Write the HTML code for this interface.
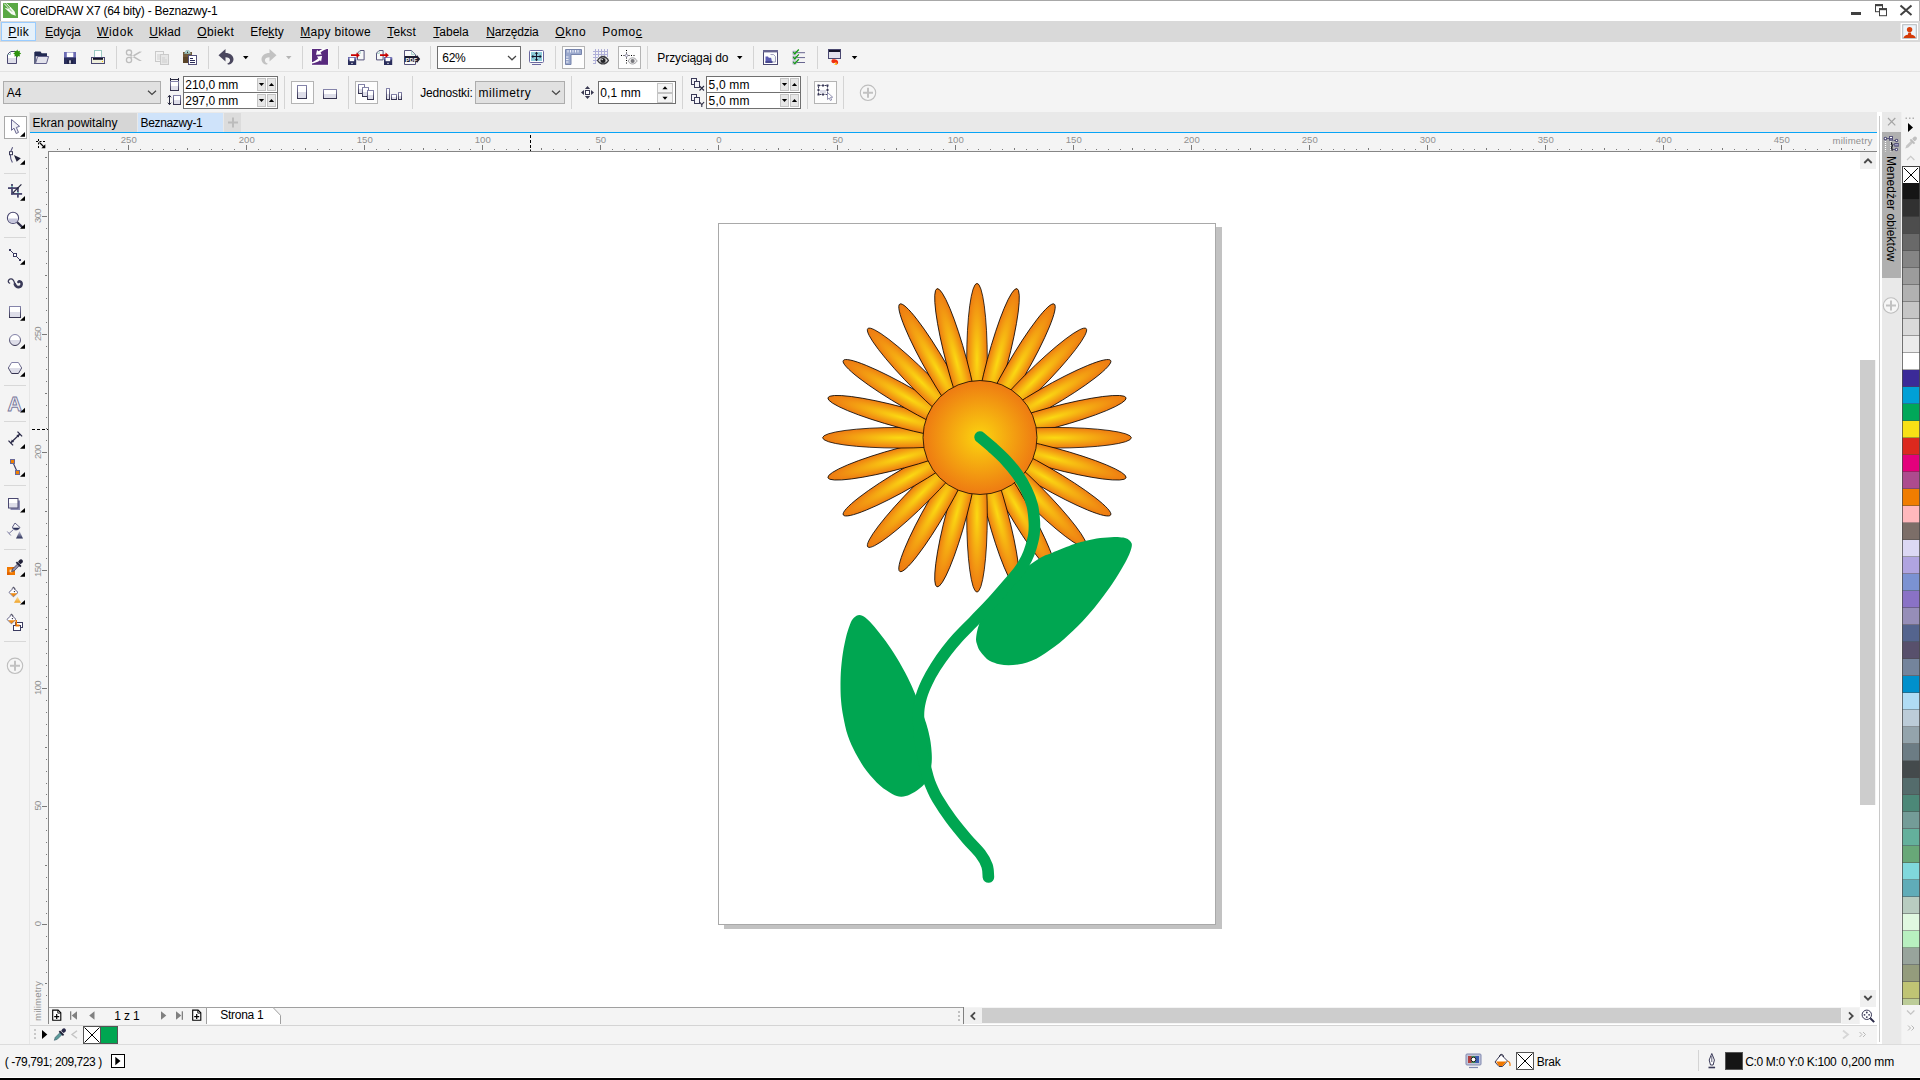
<!DOCTYPE html>
<html lang="pl"><head><meta charset="utf-8"><title>CorelDRAW X7 (64 bity) - Beznazwy-1</title><style>
html,body{margin:0;padding:0;}
body{width:1920px;height:1080px;overflow:hidden;background:#f4f4f4;font-family:"Liberation Sans", sans-serif;font-size:12px;color:#000;position:relative}
.a{position:absolute}
.t{position:absolute;white-space:nowrap;line-height:1}
u{text-decoration:underline;text-underline-offset:1px}
svg{position:absolute;left:0;top:0;overflow:visible}
</style></head><body>
<div class="a" style="left:0px;top:0px;width:1920px;height:21px;background:#ffffff;"></div>
<div class="a" style="left:0px;top:0px;width:1920px;height:1px;background:#a8a8a8;"></div>
<div class="a" style="left:1919px;top:0px;width:1px;height:21px;background:#b4b4b4;"></div>
<div class="a" style="left:0px;top:0px;width:1px;height:21px;background:#a8a8a8;"></div>
<div class="a" style="left:0px;top:21px;width:1920px;height:21px;background:#d9d9d9;"></div>
<div class="a" style="left:1px;top:22px;width:35px;height:19px;background:#e5f1fb;border:1px solid #99ccff;box-sizing:border-box;"></div>
<div class="a" style="left:1900px;top:23px;width:18px;height:17px;background:#f4f4f4;border:1px solid #e8e8e8;box-sizing:border-box;"></div>
<div class="a" style="left:0px;top:42px;width:1920px;height:29px;background:#f4f4f4;"></div>
<div class="a" style="left:0px;top:71px;width:1920px;height:1px;background:#e2e2e2;"></div>
<div class="a" style="left:0px;top:72px;width:1920px;height:39px;background:#f4f4f4;"></div>
<div class="a" style="left:0px;top:112px;width:30px;height:933px;background:#f4f4f4;"></div>
<div class="a" style="left:29px;top:112px;width:1px;height:933px;background:#e6e6e6;"></div>
<div class="a" style="left:30px;top:112px;width:1847px;height:20px;background:#e9e9e9;"></div>
<div class="a" style="left:30px;top:113px;width:107px;height:19px;background:#d6d6d6;"></div>
<div class="a" style="left:138px;top:113px;width:85px;height:19px;background:#cfe3fa;"></div>
<div class="a" style="left:224px;top:113px;width:17px;height:19px;background:#dcdcdc;"></div>
<div class="a" style="left:30px;top:132px;width:1847px;height:1px;background:#08a4f6;"></div>
<div class="a" style="left:30px;top:133px;width:1847px;height:18px;background:#f4f4f4;"></div>
<div class="a" style="left:30px;top:151px;width:18px;height:873px;background:#f4f4f4;"></div>
<div class="a" style="left:49px;top:152px;width:1811px;height:855px;background:#ffffff;"></div>
<div class="a" style="left:1860px;top:152px;width:17px;height:872px;background:#ffffff;"></div>
<div class="a" style="left:48px;top:151px;width:1829px;height:1px;background:#868686;"></div>
<div class="a" style="left:48px;top:151px;width:1px;height:873px;background:#868686;"></div>
<div class="a" style="left:1860px;top:152px;width:16px;height:17px;background:#f0f0f0;"></div>
<div class="a" style="left:1860px;top:360px;width:15px;height:445px;background:#cdcdcd;"></div>
<div class="a" style="left:1875px;top:360px;width:1px;height:445px;background:#f4f4f4;"></div>
<div class="a" style="left:1860px;top:990px;width:16px;height:17px;background:#f0f0f0;"></div>
<div class="a" style="left:49px;top:1007px;width:915px;height:1px;background:#a0a0a0;"></div>
<div class="a" style="left:49px;top:1008px;width:914px;height:16px;background:#f4f4f4;"></div>
<div class="a" style="left:963px;top:1007px;width:1px;height:17px;background:#808080;"></div>
<div class="a" style="left:964px;top:1008px;width:18px;height:16px;background:#f0f0f0;"></div>
<div class="a" style="left:982px;top:1008px;width:859px;height:15px;background:#cdcdcd;"></div>
<div class="a" style="left:1842px;top:1008px;width:17px;height:16px;background:#f0f0f0;"></div>
<div class="a" style="left:964px;top:1024px;width:913px;height:1px;background:#ffffff;"></div>
<div class="a" style="left:30px;top:1025px;width:1847px;height:1px;background:#d4d4d4;"></div>
<div class="a" style="left:30px;top:1026px;width:1847px;height:18px;background:#f4f4f4;"></div>
<div class="a" style="left:1877px;top:112px;width:5px;height:932px;background:#ffffff;"></div>
<div class="a" style="left:1879px;top:116px;width:1px;height:926px;background:#c8c8c8;"></div>
<div class="a" style="left:1882px;top:112px;width:19px;height:932px;background:#e9e9e9;"></div>
<div class="a" style="left:1882px;top:132px;width:19px;height:146px;background:#b0b0b0;"></div>
<div class="a" style="left:1901px;top:112px;width:1px;height:932px;background:#f0f0f0;"></div>
<div class="a" style="left:1902px;top:112px;width:18px;height:932px;background:#f4f4f4;"></div>
<div class="a" style="left:0px;top:1044px;width:1920px;height:1px;background:#dcdcdc;"></div>
<div class="a" style="left:0px;top:1045px;width:1920px;height:32px;background:#f4f4f4;"></div>
<div class="a" style="left:0px;top:1077px;width:1920px;height:1px;background:#ffffff;"></div>
<div class="a" style="left:0px;top:1078px;width:1920px;height:2px;background:#000000;"></div>
<div class="a" style="left:116px;top:46px;width:1px;height:23px;background:#d4d4d4;"></div>
<div class="a" style="left:208px;top:46px;width:1px;height:23px;background:#d4d4d4;"></div>
<div class="a" style="left:302px;top:46px;width:1px;height:23px;background:#d4d4d4;"></div>
<div class="a" style="left:338px;top:46px;width:1px;height:23px;background:#d4d4d4;"></div>
<div class="a" style="left:430px;top:46px;width:1px;height:23px;background:#d4d4d4;"></div>
<div class="a" style="left:555px;top:46px;width:1px;height:23px;background:#d4d4d4;"></div>
<div class="a" style="left:647px;top:46px;width:1px;height:23px;background:#d4d4d4;"></div>
<div class="a" style="left:753px;top:46px;width:1px;height:23px;background:#d4d4d4;"></div>
<div class="a" style="left:817px;top:46px;width:1px;height:23px;background:#d4d4d4;"></div>
<div class="a" style="left:284px;top:76px;width:1px;height:33px;background:#d4d4d4;"></div>
<div class="a" style="left:348px;top:76px;width:1px;height:33px;background:#d4d4d4;"></div>
<div class="a" style="left:412px;top:76px;width:1px;height:33px;background:#d4d4d4;"></div>
<div class="a" style="left:571px;top:76px;width:1px;height:33px;background:#d4d4d4;"></div>
<div class="a" style="left:682px;top:76px;width:1px;height:33px;background:#d4d4d4;"></div>
<div class="a" style="left:807px;top:76px;width:1px;height:33px;background:#d4d4d4;"></div>
<div class="a" style="left:843px;top:76px;width:1px;height:33px;background:#d4d4d4;"></div>
<div class="a" style="left:4px;top:173px;width:22px;height:1px;background:#d8d8d8;"></div>
<div class="a" style="left:4px;top:237px;width:22px;height:1px;background:#d8d8d8;"></div>
<div class="a" style="left:4px;top:385px;width:22px;height:1px;background:#d8d8d8;"></div>
<div class="a" style="left:4px;top:421px;width:22px;height:1px;background:#d8d8d8;"></div>
<div class="a" style="left:4px;top:485px;width:22px;height:1px;background:#d8d8d8;"></div>
<div class="a" style="left:4px;top:549px;width:22px;height:1px;background:#d8d8d8;"></div>
<div class="a" style="left:4px;top:641px;width:22px;height:1px;background:#d8d8d8;"></div>
<div class="a" style="left:437px;top:46px;width:84px;height:23px;background:#ffffff;border:1px solid #707070;box-sizing:border-box;"></div>
<div class="a" style="left:562px;top:46px;width:23px;height:23px;background:#fdfdfd;border:1px solid #b4b4b4;box-sizing:border-box;"></div>
<div class="a" style="left:618px;top:46px;width:23px;height:23px;background:#fdfdfd;border:1px solid #b4b4b4;box-sizing:border-box;"></div>
<div class="a" style="left:3px;top:81px;width:158px;height:23px;background:#e1e1e1;border:1px solid #adadad;box-sizing:border-box;"></div>
<div class="a" style="left:183px;top:76px;width:95px;height:17px;background:#ffffff;border:1px solid #707070;box-sizing:border-box;"></div>
<div class="a" style="left:183px;top:92px;width:95px;height:17px;background:#ffffff;border:1px solid #707070;box-sizing:border-box;"></div>
<div class="a" style="left:257px;top:78px;width:9px;height:13px;background:#e6e6e6;border:1px solid #c4c4c4;box-sizing:border-box;"></div>
<div class="a" style="left:267px;top:78px;width:9px;height:13px;background:#e6e6e6;border:1px solid #c4c4c4;box-sizing:border-box;"></div>
<div class="a" style="left:257px;top:94px;width:9px;height:13px;background:#e6e6e6;border:1px solid #c4c4c4;box-sizing:border-box;"></div>
<div class="a" style="left:267px;top:94px;width:9px;height:13px;background:#e6e6e6;border:1px solid #c4c4c4;box-sizing:border-box;"></div>
<div class="a" style="left:291px;top:81px;width:23px;height:23px;background:#fdfdfd;border:1px solid #b4b4b4;box-sizing:border-box;"></div>
<div class="a" style="left:355px;top:81px;width:23px;height:23px;background:#fdfdfd;border:1px solid #b4b4b4;box-sizing:border-box;"></div>
<div class="a" style="left:475px;top:81px;width:90px;height:23px;background:#e1e1e1;border:1px solid #adadad;box-sizing:border-box;"></div>
<div class="a" style="left:598px;top:81px;width:78px;height:23px;background:#ffffff;border:1px solid #707070;box-sizing:border-box;"></div>
<div class="a" style="left:657px;top:83px;width:16px;height:10px;background:#f4f4f4;border:1px solid #c4c4c4;box-sizing:border-box;"></div>
<div class="a" style="left:657px;top:93px;width:16px;height:10px;background:#f4f4f4;border:1px solid #c4c4c4;box-sizing:border-box;"></div>
<div class="a" style="left:706px;top:76px;width:95px;height:17px;background:#ffffff;border:1px solid #707070;box-sizing:border-box;"></div>
<div class="a" style="left:706px;top:92px;width:95px;height:17px;background:#ffffff;border:1px solid #707070;box-sizing:border-box;"></div>
<div class="a" style="left:780px;top:78px;width:9px;height:13px;background:#e6e6e6;border:1px solid #c4c4c4;box-sizing:border-box;"></div>
<div class="a" style="left:790px;top:78px;width:9px;height:13px;background:#e6e6e6;border:1px solid #c4c4c4;box-sizing:border-box;"></div>
<div class="a" style="left:780px;top:94px;width:9px;height:13px;background:#e6e6e6;border:1px solid #c4c4c4;box-sizing:border-box;"></div>
<div class="a" style="left:790px;top:94px;width:9px;height:13px;background:#e6e6e6;border:1px solid #c4c4c4;box-sizing:border-box;"></div>
<div class="a" style="left:814px;top:81px;width:23px;height:23px;background:#fdfdfd;border:1px solid #b4b4b4;box-sizing:border-box;"></div>
<div class="a" style="left:4px;top:116px;width:23px;height:23px;background:#ffffff;border:1px solid #a8a8a8;box-sizing:border-box;"></div>
<svg width="1920" height="1080"><path d="M206.5 1024V1007.500H273L280.500 1015.300V1024" fill="#fff" stroke="#a0a0a0" stroke-width="1"/></svg>
<div class="a" style="left:83px;top:1026px;width:18px;height:18px;background:#ffffff;border:1px solid #555;box-sizing:border-box;"></div>
<div class="a" style="left:100px;top:1026px;width:18px;height:18px;background:#00a651;border:1px solid #555;box-sizing:border-box;"></div>
<div class="a" style="left:111px;top:1054px;width:14px;height:14px;background:#ffffff;border:1px solid #000;box-sizing:border-box;"></div>
<div class="a" style="left:1516px;top:1052px;width:18px;height:18px;background:#ffffff;border:1px solid #555;box-sizing:border-box;"></div>
<div class="a" style="left:1725px;top:1052px;width:18px;height:18px;background:#151515;border:1px solid #555;box-sizing:border-box;"></div>
<div class="a" style="left:1698px;top:1050px;width:1px;height:21px;background:#d4d4d4;"></div>
<div class="t" style="left:1897.4px;top:156.2px;font-size:12px;transform-origin:0 0;transform:rotate(90deg);letter-spacing:0.08px">Menedżer obiektów</div>
<svg width="1920" height="1080"><path d="M57 149h1v1h-1zM69 148h1v2h-1zM81 149h1v1h-1zM92 149h1v1h-1zM104 149h1v1h-1zM116 149h1v1h-1zM128 145h1v5h-1zM140 149h1v1h-1zM152 149h1v1h-1zM163 149h1v1h-1zM175 149h1v1h-1zM187 148h1v2h-1zM199 149h1v1h-1zM211 149h1v1h-1zM222 149h1v1h-1zM234 149h1v1h-1zM246 145h1v5h-1zM258 149h1v1h-1zM270 149h1v1h-1zM281 149h1v1h-1zM293 149h1v1h-1zM305 148h1v2h-1zM317 149h1v1h-1zM329 149h1v1h-1zM341 149h1v1h-1zM352 149h1v1h-1zM364 145h1v5h-1zM376 149h1v1h-1zM388 149h1v1h-1zM400 149h1v1h-1zM411 149h1v1h-1zM423 148h1v2h-1zM435 149h1v1h-1zM447 149h1v1h-1zM459 149h1v1h-1zM470 149h1v1h-1zM482 145h1v5h-1zM494 149h1v1h-1zM506 149h1v1h-1zM518 149h1v1h-1zM530 149h1v1h-1zM541 148h1v2h-1zM553 149h1v1h-1zM565 149h1v1h-1zM577 149h1v1h-1zM589 149h1v1h-1zM600 145h1v5h-1zM612 149h1v1h-1zM624 149h1v1h-1zM636 149h1v1h-1zM648 149h1v1h-1zM659 148h1v2h-1zM671 149h1v1h-1zM683 149h1v1h-1zM695 149h1v1h-1zM707 149h1v1h-1zM718 145h1v5h-1zM730 149h1v1h-1zM742 149h1v1h-1zM754 149h1v1h-1zM766 149h1v1h-1zM778 148h1v2h-1zM789 149h1v1h-1zM801 149h1v1h-1zM813 149h1v1h-1zM825 149h1v1h-1zM837 145h1v5h-1zM848 149h1v1h-1zM860 149h1v1h-1zM872 149h1v1h-1zM884 149h1v1h-1zM896 148h1v2h-1zM907 149h1v1h-1zM919 149h1v1h-1zM931 149h1v1h-1zM943 149h1v1h-1zM955 145h1v5h-1zM967 149h1v1h-1zM978 149h1v1h-1zM990 149h1v1h-1zM1002 149h1v1h-1zM1014 148h1v2h-1zM1026 149h1v1h-1zM1037 149h1v1h-1zM1049 149h1v1h-1zM1061 149h1v1h-1zM1073 145h1v5h-1zM1085 149h1v1h-1zM1096 149h1v1h-1zM1108 149h1v1h-1zM1120 149h1v1h-1zM1132 148h1v2h-1zM1144 149h1v1h-1zM1155 149h1v1h-1zM1167 149h1v1h-1zM1179 149h1v1h-1zM1191 145h1v5h-1zM1203 149h1v1h-1zM1215 149h1v1h-1zM1226 149h1v1h-1zM1238 149h1v1h-1zM1250 148h1v2h-1zM1262 149h1v1h-1zM1274 149h1v1h-1zM1285 149h1v1h-1zM1297 149h1v1h-1zM1309 145h1v5h-1zM1321 149h1v1h-1zM1333 149h1v1h-1zM1344 149h1v1h-1zM1356 149h1v1h-1zM1368 148h1v2h-1zM1380 149h1v1h-1zM1392 149h1v1h-1zM1404 149h1v1h-1zM1415 149h1v1h-1zM1427 145h1v5h-1zM1439 149h1v1h-1zM1451 149h1v1h-1zM1463 149h1v1h-1zM1474 149h1v1h-1zM1486 148h1v2h-1zM1498 149h1v1h-1zM1510 149h1v1h-1zM1522 149h1v1h-1zM1533 149h1v1h-1zM1545 145h1v5h-1zM1557 149h1v1h-1zM1569 149h1v1h-1zM1581 149h1v1h-1zM1592 149h1v1h-1zM1604 148h1v2h-1zM1616 149h1v1h-1zM1628 149h1v1h-1zM1640 149h1v1h-1zM1652 149h1v1h-1zM1663 145h1v5h-1zM1675 149h1v1h-1zM1687 149h1v1h-1zM1699 149h1v1h-1zM1711 149h1v1h-1zM1722 148h1v2h-1zM1734 149h1v1h-1zM1746 149h1v1h-1zM1758 149h1v1h-1zM1770 149h1v1h-1zM1781 145h1v5h-1zM1793 149h1v1h-1zM1805 149h1v1h-1zM1817 149h1v1h-1zM1829 149h1v1h-1zM1841 148h1v2h-1zM1852 149h1v1h-1zM1864 149h1v1h-1zM46 995h1v1h-1zM45 983h2v1h-2zM46 972h1v1h-1zM46 960h1v1h-1zM46 948h1v1h-1zM46 936h1v1h-1zM42 924h5v1h-5zM46 913h1v1h-1zM46 901h1v1h-1zM46 889h1v1h-1zM46 877h1v1h-1zM45 865h2v1h-2zM46 854h1v1h-1zM46 842h1v1h-1zM46 830h1v1h-1zM46 818h1v1h-1zM42 806h5v1h-5zM46 794h1v1h-1zM46 783h1v1h-1zM46 771h1v1h-1zM46 759h1v1h-1zM45 747h2v1h-2zM46 735h1v1h-1zM46 724h1v1h-1zM46 712h1v1h-1zM46 700h1v1h-1zM42 688h5v1h-5zM46 676h1v1h-1zM46 665h1v1h-1zM46 653h1v1h-1zM46 641h1v1h-1zM45 629h2v1h-2zM46 617h1v1h-1zM46 606h1v1h-1zM46 594h1v1h-1zM46 582h1v1h-1zM42 570h5v1h-5zM46 558h1v1h-1zM46 546h1v1h-1zM46 535h1v1h-1zM46 523h1v1h-1zM45 511h2v1h-2zM46 499h1v1h-1zM46 487h1v1h-1zM46 476h1v1h-1zM46 464h1v1h-1zM42 452h5v1h-5zM46 440h1v1h-1zM46 428h1v1h-1zM46 417h1v1h-1zM46 405h1v1h-1zM45 393h2v1h-2zM46 381h1v1h-1zM46 369h1v1h-1zM46 357h1v1h-1zM46 346h1v1h-1zM42 334h5v1h-5zM46 322h1v1h-1zM46 310h1v1h-1zM46 298h1v1h-1zM46 287h1v1h-1zM45 275h2v1h-2zM46 263h1v1h-1zM46 251h1v1h-1zM46 239h1v1h-1zM46 228h1v1h-1zM42 216h5v1h-5zM46 204h1v1h-1zM46 192h1v1h-1zM46 180h1v1h-1zM46 168h1v1h-1zM45 157h2v1h-2z" fill="#7a7a7a"/><path d="M530.5 135v16" stroke="#000" stroke-width="1" stroke-dasharray="3 2"/><path d="M32 429.5h16" stroke="#000" stroke-width="1" stroke-dasharray="3 2"/><path d="M36 141.5h10M38.5 139v10" stroke="#000" stroke-width="1" stroke-dasharray="2 1.5"/><path d="M39.5 142.5l5 5" stroke="#000" stroke-width="1.1" fill="none"/><path d="M45.3 144.3v3.9h-3.9z" fill="#000"/></svg>
<div class="t" style="left:108.8px;top:135.1px;width:40px;text-align:center;font-size:9.6px;color:#909090">250</div>
<div class="t" style="left:226.8px;top:135.1px;width:40px;text-align:center;font-size:9.6px;color:#909090">200</div>
<div class="t" style="left:344.8px;top:135.1px;width:40px;text-align:center;font-size:9.6px;color:#909090">150</div>
<div class="t" style="left:462.8px;top:135.1px;width:40px;text-align:center;font-size:9.6px;color:#909090">100</div>
<div class="t" style="left:580.8px;top:135.1px;width:40px;text-align:center;font-size:9.6px;color:#909090">50</div>
<div class="t" style="left:698.8px;top:135.1px;width:40px;text-align:center;font-size:9.6px;color:#909090">0</div>
<div class="t" style="left:817.8px;top:135.1px;width:40px;text-align:center;font-size:9.6px;color:#909090">50</div>
<div class="t" style="left:935.8px;top:135.1px;width:40px;text-align:center;font-size:9.6px;color:#909090">100</div>
<div class="t" style="left:1053.8px;top:135.1px;width:40px;text-align:center;font-size:9.6px;color:#909090">150</div>
<div class="t" style="left:1171.8px;top:135.1px;width:40px;text-align:center;font-size:9.6px;color:#909090">200</div>
<div class="t" style="left:1289.8px;top:135.1px;width:40px;text-align:center;font-size:9.6px;color:#909090">250</div>
<div class="t" style="left:1407.8px;top:135.1px;width:40px;text-align:center;font-size:9.6px;color:#909090">300</div>
<div class="t" style="left:1525.8px;top:135.1px;width:40px;text-align:center;font-size:9.6px;color:#909090">350</div>
<div class="t" style="left:1643.8px;top:135.1px;width:40px;text-align:center;font-size:9.6px;color:#909090">400</div>
<div class="t" style="left:1761.8px;top:135.1px;width:40px;text-align:center;font-size:9.6px;color:#909090">450</div>
<div class="t" style="left:1832.6px;top:135.9px;font-size:9.6px;color:#909090;letter-spacing:0.17px">milimetry</div>
<div class="t" style="left:33.1px;top:943.5px;width:40px;text-align:center;font-size:9.6px;letter-spacing:-0.75px;color:#909090;transform-origin:0 0;transform:rotate(-90deg)">0</div>
<div class="t" style="left:33.1px;top:825.5px;width:40px;text-align:center;font-size:9.6px;letter-spacing:-0.75px;color:#909090;transform-origin:0 0;transform:rotate(-90deg)">50</div>
<div class="t" style="left:33.1px;top:707.5px;width:40px;text-align:center;font-size:9.6px;letter-spacing:-0.75px;color:#909090;transform-origin:0 0;transform:rotate(-90deg)">100</div>
<div class="t" style="left:33.1px;top:589.5px;width:40px;text-align:center;font-size:9.6px;letter-spacing:-0.75px;color:#909090;transform-origin:0 0;transform:rotate(-90deg)">150</div>
<div class="t" style="left:33.1px;top:471.5px;width:40px;text-align:center;font-size:9.6px;letter-spacing:-0.75px;color:#909090;transform-origin:0 0;transform:rotate(-90deg)">200</div>
<div class="t" style="left:33.1px;top:353.5px;width:40px;text-align:center;font-size:9.6px;letter-spacing:-0.75px;color:#909090;transform-origin:0 0;transform:rotate(-90deg)">250</div>
<div class="t" style="left:33.1px;top:235.5px;width:40px;text-align:center;font-size:9.6px;letter-spacing:-0.75px;color:#909090;transform-origin:0 0;transform:rotate(-90deg)">300</div>
<div class="t" style="left:32.9px;top:1020.6px;font-size:9.6px;color:#909090;transform-origin:0 0;transform:rotate(-90deg);letter-spacing:0.17px">milimetry</div>
<svg width="1920" height="1080"><rect x="1902.5" y="166.5" width="17" height="17" fill="#fff" stroke="#444"/><path d="M1904 168l14 14M1918 168l-14 14" stroke="#000" stroke-width="1"/><rect x="1902" y="183" width="18" height="17" fill="#151515"/><rect x="1902" y="200" width="18" height="17" fill="#313131"/><rect x="1902" y="217" width="18" height="17" fill="#4d4d4d"/><rect x="1902" y="234" width="18" height="17" fill="#696969"/><rect x="1902" y="251" width="18" height="17" fill="#858585"/><rect x="1902" y="268" width="18" height="17" fill="#9c9c9c"/><rect x="1902" y="285" width="18" height="17" fill="#b1b1b1"/><rect x="1902" y="302" width="18" height="17" fill="#c6c6c6"/><rect x="1902" y="319" width="18" height="17" fill="#dadada"/><rect x="1902" y="336" width="18" height="17" fill="#ebebeb"/><rect x="1902" y="353" width="18" height="17" fill="#ffffff"/><rect x="1902" y="370" width="18" height="17" fill="#3b2a98"/><rect x="1902" y="387" width="18" height="17" fill="#00a0d6"/><rect x="1902" y="404" width="18" height="17" fill="#00a859"/><rect x="1902" y="421" width="18" height="17" fill="#f9e015"/><rect x="1902" y="438" width="18" height="17" fill="#dc291e"/><rect x="1902" y="455" width="18" height="17" fill="#e4007c"/><rect x="1902" y="472" width="18" height="17" fill="#ad4b8e"/><rect x="1902" y="489" width="18" height="17" fill="#f07d00"/><rect x="1902" y="506" width="18" height="17" fill="#ffb8bc"/><rect x="1902" y="523" width="18" height="17" fill="#7c6e68"/><rect x="1902" y="540" width="18" height="17" fill="#dcd8f4"/><rect x="1902" y="557" width="18" height="17" fill="#b0a4e0"/><rect x="1902" y="574" width="18" height="17" fill="#7b92d2"/><rect x="1902" y="591" width="18" height="17" fill="#8a72c6"/><rect x="1902" y="608" width="18" height="17" fill="#968eb8"/><rect x="1902" y="625" width="18" height="17" fill="#54648e"/><rect x="1902" y="642" width="18" height="17" fill="#58506c"/><rect x="1902" y="659" width="18" height="17" fill="#74849c"/><rect x="1902" y="676" width="18" height="17" fill="#0090cc"/><rect x="1902" y="693" width="18" height="17" fill="#b0dcf4"/><rect x="1902" y="710" width="18" height="17" fill="#bcccd8"/><rect x="1902" y="727" width="18" height="17" fill="#94a4ac"/><rect x="1902" y="744" width="18" height="17" fill="#6c7c84"/><rect x="1902" y="761" width="18" height="17" fill="#444a4c"/><rect x="1902" y="778" width="18" height="17" fill="#546c6c"/><rect x="1902" y="795" width="18" height="17" fill="#4c8878"/><rect x="1902" y="812" width="18" height="17" fill="#749c98"/><rect x="1902" y="829" width="18" height="17" fill="#64b09c"/><rect x="1902" y="846" width="18" height="17" fill="#68a878"/><rect x="1902" y="863" width="18" height="17" fill="#80d8dc"/><rect x="1902" y="880" width="18" height="17" fill="#60acb8"/><rect x="1902" y="897" width="18" height="17" fill="#b8ccc0"/><rect x="1902" y="914" width="18" height="17" fill="#e0f8e0"/><rect x="1902" y="931" width="18" height="17" fill="#b8f0c0"/><rect x="1902" y="948" width="18" height="17" fill="#98a49c"/><rect x="1902" y="965" width="18" height="17" fill="#949c7c"/><rect x="1902" y="982" width="18" height="17" fill="#c0c474"/><rect x="1902" y="999" width="18" height="6" fill="#bccc98"/><rect x="1902" y="183" width="1" height="822" fill="#4a4a4a" opacity="0.75"/><rect x="1919" y="183" width="1" height="822" fill="#4a4a4a" opacity="0.75"/><path d="M1902 200h18M1902 217h18M1902 234h18M1902 251h18M1902 268h18M1902 285h18M1902 302h18M1902 319h18M1902 336h18M1902 353h18M1902 370h18M1902 387h18M1902 404h18M1902 421h18M1902 438h18M1902 455h18M1902 472h18M1902 489h18M1902 506h18M1902 523h18M1902 540h18M1902 557h18M1902 574h18M1902 591h18M1902 608h18M1902 625h18M1902 642h18M1902 659h18M1902 676h18M1902 693h18M1902 710h18M1902 727h18M1902 744h18M1902 761h18M1902 778h18M1902 795h18M1902 812h18M1902 829h18M1902 846h18M1902 863h18M1902 880h18M1902 897h18M1902 914h18M1902 931h18M1902 948h18M1902 965h18M1902 982h18M1902 999h18" stroke="#4a4a4a" stroke-width="1" opacity="0.45" transform="translate(0,-0.5)"/></svg>
<svg width="1920" height="1080"><defs><radialGradient id="pg"><stop offset="0" stop-color="#fbd912"/><stop offset="1" stop-color="#ee7a12"/></radialGradient><radialGradient id="dg"><stop offset="0" stop-color="#fbd40f"/><stop offset="1" stop-color="#ee7a12"/></radialGradient></defs><rect x="1216" y="227" width="6" height="702" fill="#c2c2c2"/><rect x="724" y="925" width="498" height="4" fill="#c2c2c2"/><rect x="718.5" y="223.5" width="497" height="701" fill="#fff" stroke="#a9a9a9"/><ellipse cx="1055" cy="437.75" rx="76.4" ry="10.3" fill="url(#pg)" stroke="#000" stroke-width="0.75" transform="rotate(-90 977 437.75)"/><ellipse cx="1055" cy="437.75" rx="76.4" ry="10.3" fill="url(#pg)" stroke="#000" stroke-width="0.75" transform="rotate(-75 977 437.75)"/><ellipse cx="1055" cy="437.75" rx="76.4" ry="10.3" fill="url(#pg)" stroke="#000" stroke-width="0.75" transform="rotate(-60 977 437.75)"/><ellipse cx="1055" cy="437.75" rx="76.4" ry="10.3" fill="url(#pg)" stroke="#000" stroke-width="0.75" transform="rotate(-45 977 437.75)"/><ellipse cx="1055" cy="437.75" rx="76.4" ry="10.3" fill="url(#pg)" stroke="#000" stroke-width="0.75" transform="rotate(-30 977 437.75)"/><ellipse cx="1055" cy="437.75" rx="76.4" ry="10.3" fill="url(#pg)" stroke="#000" stroke-width="0.75" transform="rotate(-15 977 437.75)"/><ellipse cx="1055" cy="437.75" rx="76.4" ry="10.3" fill="url(#pg)" stroke="#000" stroke-width="0.75" transform="rotate(0 977 437.75)"/><ellipse cx="1055" cy="437.75" rx="76.4" ry="10.3" fill="url(#pg)" stroke="#000" stroke-width="0.75" transform="rotate(15 977 437.75)"/><ellipse cx="1055" cy="437.75" rx="76.4" ry="10.3" fill="url(#pg)" stroke="#000" stroke-width="0.75" transform="rotate(30 977 437.75)"/><ellipse cx="1055" cy="437.75" rx="76.4" ry="10.3" fill="url(#pg)" stroke="#000" stroke-width="0.75" transform="rotate(45 977 437.75)"/><ellipse cx="1055" cy="437.75" rx="76.4" ry="10.3" fill="url(#pg)" stroke="#000" stroke-width="0.75" transform="rotate(60 977 437.75)"/><ellipse cx="1055" cy="437.75" rx="76.4" ry="10.3" fill="url(#pg)" stroke="#000" stroke-width="0.75" transform="rotate(75 977 437.75)"/><ellipse cx="1055" cy="437.75" rx="76.4" ry="10.3" fill="url(#pg)" stroke="#000" stroke-width="0.75" transform="rotate(90 977 437.75)"/><ellipse cx="1055" cy="437.75" rx="76.4" ry="10.3" fill="url(#pg)" stroke="#000" stroke-width="0.75" transform="rotate(105 977 437.75)"/><ellipse cx="1055" cy="437.75" rx="76.4" ry="10.3" fill="url(#pg)" stroke="#000" stroke-width="0.75" transform="rotate(120 977 437.75)"/><ellipse cx="1055" cy="437.75" rx="76.4" ry="10.3" fill="url(#pg)" stroke="#000" stroke-width="0.75" transform="rotate(135 977 437.75)"/><ellipse cx="1055" cy="437.75" rx="76.4" ry="10.3" fill="url(#pg)" stroke="#000" stroke-width="0.75" transform="rotate(150 977 437.75)"/><ellipse cx="1055" cy="437.75" rx="76.4" ry="10.3" fill="url(#pg)" stroke="#000" stroke-width="0.75" transform="rotate(165 977 437.75)"/><ellipse cx="1055" cy="437.75" rx="76.4" ry="10.3" fill="url(#pg)" stroke="#000" stroke-width="0.75" transform="rotate(180 977 437.75)"/><ellipse cx="1055" cy="437.75" rx="76.4" ry="10.3" fill="url(#pg)" stroke="#000" stroke-width="0.75" transform="rotate(195 977 437.75)"/><ellipse cx="1055" cy="437.75" rx="76.4" ry="10.3" fill="url(#pg)" stroke="#000" stroke-width="0.75" transform="rotate(210 977 437.75)"/><ellipse cx="1055" cy="437.75" rx="76.4" ry="10.3" fill="url(#pg)" stroke="#000" stroke-width="0.75" transform="rotate(225 977 437.75)"/><ellipse cx="1055" cy="437.75" rx="76.4" ry="10.3" fill="url(#pg)" stroke="#000" stroke-width="0.75" transform="rotate(240 977 437.75)"/><ellipse cx="1055" cy="437.75" rx="76.4" ry="10.3" fill="url(#pg)" stroke="#000" stroke-width="0.75" transform="rotate(255 977 437.75)"/><circle cx="980" cy="437.5" r="57" fill="url(#dg)" stroke="#000" stroke-width="0.75"/><path d="M976.1 638.0C976.5 634.1 977.7 627.3 980.0 622.0C982.3 616.7 986.2 611.3 990.0 606.0C993.8 600.7 998.3 595.3 1003.0 590.0C1007.7 584.7 1011.8 579.3 1018.0 574.0C1024.2 568.7 1034.3 561.5 1040.0 558.0C1045.7 554.5 1046.3 555.2 1052.0 552.9C1057.7 550.6 1068.6 546.1 1074.3 544.1C1080.0 542.1 1082.0 541.8 1086.3 540.8C1090.6 539.8 1095.6 538.8 1100.2 538.1C1104.8 537.5 1110.2 537.0 1114.1 536.9C1117.9 536.8 1120.8 537.1 1123.3 537.6C1125.8 538.1 1127.5 538.9 1128.9 539.9C1130.3 540.9 1131.3 542.1 1131.7 543.6C1132.1 545.1 1131.8 546.5 1131.2 548.7C1130.6 550.9 1129.6 553.6 1128.0 557.0C1126.4 560.4 1124.1 564.6 1121.5 569.1C1118.9 573.6 1115.6 578.9 1112.3 583.8C1109.0 588.7 1105.0 594.1 1101.6 598.6C1098.2 603.1 1095.3 606.8 1092.1 610.6C1088.9 614.4 1085.7 618.0 1082.6 621.3C1079.5 624.6 1076.4 627.6 1073.3 630.6C1070.2 633.6 1067.2 636.4 1064.1 639.1C1061.0 641.8 1057.9 644.3 1054.8 646.6C1051.7 648.9 1048.7 651.1 1045.6 653.1C1042.5 655.1 1039.4 657.2 1036.3 658.7C1033.2 660.2 1030.1 661.5 1027.0 662.4C1023.9 663.3 1020.9 663.9 1017.8 664.4C1014.7 664.9 1011.6 665.2 1008.5 665.2C1005.4 665.2 1002.4 665.0 999.3 664.3C996.2 663.6 992.5 662.3 990.0 661.0C987.5 659.7 986.2 658.2 984.5 656.5C982.8 654.8 981.2 652.8 980.0 651.0C978.8 649.2 978.0 647.7 977.4 645.5C976.8 643.3 975.7 641.9 976.1 638.0Z" fill="#00a651"/><path d="M859.4 615.0C861.4 615.0 863.1 615.8 865.6 617.8C868.1 619.8 871.1 622.8 874.4 626.7C877.7 630.6 881.9 635.9 885.6 641.1C889.3 646.3 893.0 651.7 896.7 657.8C900.4 663.9 904.6 671.6 907.8 677.8C910.9 684.0 912.9 688.5 915.6 695.0C918.3 701.5 921.9 711.1 923.9 716.7C925.9 722.4 926.7 724.6 927.8 728.9C928.9 733.1 930.0 738.1 930.6 742.2C931.2 746.3 931.5 750.0 931.7 753.3C931.9 756.6 931.9 759.4 931.7 762.2C931.5 765.0 931.1 767.4 930.5 770.0C929.9 772.6 929.1 775.6 928.0 778.0C926.9 780.4 925.4 782.6 923.9 784.4C922.4 786.2 921.2 787.2 918.9 788.9C916.6 790.6 913.0 793.1 910.0 794.4C907.0 795.7 904.1 796.8 901.1 796.7C898.1 796.6 895.7 795.8 892.2 793.9C888.7 792.0 884.2 789.4 880.0 785.6C875.8 781.8 870.8 776.5 866.7 771.1C862.6 765.7 858.8 759.2 855.6 753.3C852.5 747.4 849.8 741.7 847.8 735.6C845.8 729.5 844.4 722.6 843.3 716.7C842.2 710.8 841.5 706.5 841.0 700.0C840.5 693.5 840.4 684.8 840.6 677.8C840.8 670.8 841.4 664.3 842.2 657.8C843.0 651.3 844.3 644.5 845.6 638.9C846.9 633.3 848.6 627.9 850.0 624.4C851.4 620.9 852.3 619.4 853.9 617.8C855.5 616.2 857.4 615.0 859.4 615.0Z" fill="#00a651"/><path d="M980.1 437.1C982.2 438.9 988.5 444.0 992.8 447.9C997.1 451.8 1001.6 455.8 1005.7 460.2C1009.8 464.6 1013.9 469.4 1017.4 474.4C1020.9 479.4 1024.0 484.8 1026.5 490.0C1029.0 495.2 1031.0 500.4 1032.3 505.6C1033.6 510.8 1034.0 516.4 1034.3 521.1C1034.6 525.8 1034.5 529.7 1034.0 534.0C1033.5 538.3 1032.2 542.9 1031.0 547.0C1029.8 551.1 1028.5 554.7 1026.5 558.7C1024.5 562.7 1022.1 566.8 1019.0 571.0C1015.9 575.2 1012.8 578.4 1008.0 584.0C1003.2 589.6 995.5 598.5 990.0 604.5C984.5 610.5 980.4 614.4 975.0 620.0C969.6 625.6 962.2 632.8 957.5 638.0C952.8 643.2 950.3 646.3 946.6 651.1C942.9 655.9 938.8 661.8 935.5 667.0C932.2 672.2 929.2 677.6 926.9 682.5C924.6 687.4 922.9 691.2 921.5 696.1C920.1 701.0 918.8 705.5 918.5 712.0C918.2 718.5 918.8 727.5 919.5 735.0C920.2 742.5 921.6 750.0 923.0 757.0C924.4 764.0 926.6 772.2 928.0 777.2C929.4 782.2 930.0 783.4 931.6 787.0C933.2 790.6 934.2 793.4 937.4 798.7C940.6 804.0 945.9 812.2 950.8 818.9C955.7 825.6 962.1 833.2 967.0 839.0C971.9 844.8 977.0 849.3 980.4 853.8C983.8 858.3 985.8 861.9 987.1 865.8C988.4 869.7 988.2 875.1 988.4 877.0" fill="none" stroke="#00a651" stroke-width="11.6" stroke-linecap="round" stroke-linejoin="round"/></svg>
<svg width="1920" height="1080"><defs><linearGradient id="pgf" x1="0" y1="0" x2="0" y2="1"><stop offset="0.5" stop-color="#fff"/><stop offset="0.5" stop-color="#dedee9"/></linearGradient><linearGradient id="pgs" x1="0" y1="0" x2="0" y2="1"><stop offset="0" stop-color="#8584aa"/><stop offset="1" stop-color="#35334f"/></linearGradient><linearGradient id="trg" x1="0" y1="0" x2="0" y2="1"><stop offset="0" stop-color="#c8c8dc"/><stop offset="1" stop-color="#2a3058"/></linearGradient><linearGradient id="org" x1="0" y1="0" x2="0" y2="1"><stop offset="0" stop-color="#fbe6b0"/><stop offset="1" stop-color="#f0a020"/></linearGradient></defs><rect x="3" y="3" width="15" height="15" fill="#5aa845"/><path d="M4.200 3.600L9.400 9.200" stroke="#fff" stroke-width="0.900"/><path d="M6.300 3.400L10.800 8" stroke="#fff" stroke-width="0.900"/><path d="M4.500 7.800L8.300 8.800L10.600 6.900L14.600 11.400L15.900 15.700L11.400 14.300Z" fill="#fff" opacity="0.950"/><path d="M8.800 8.200L12 11.600" stroke="#5aa845" stroke-width="0.700"/><rect x="1851" y="12" width="10" height="3" fill="#404040"/><rect x="1875.5" y="4.7" width="7" height="7" fill="#fff" stroke="#404040"/><rect x="1875" y="4.2" width="8" height="2" fill="#404040"/><rect x="1879.5" y="8.7" width="7" height="7" fill="#fff" stroke="#404040"/><rect x="1879" y="8.2" width="8" height="2" fill="#404040"/><path d="M1900.5 5.5l11 9.5M1911.5 5.5l-11 9.5" stroke="#404040" stroke-width="2"/><rect x="1901" y="23" width="17" height="17" fill="#fff"/><rect x="1902.7" y="24.7" width="13.6" height="13.6" fill="#eef4fa" stroke="#b4b8bc" stroke-width="1"/><circle cx="1909.6" cy="29.6" r="2.7" fill="#d8400c"/><path d="M1903.5 38c0.3-2.2 2.2-3 4.3-3.3l0.6-2.2h2.4l0.6 2.2c2.1 0.3 4 1.1 4.3 3.3z" fill="#d43a08"/><path d="M10.5 51.5h6v12h-9v-9z" fill="url(#pgf)" stroke="#4a4870" stroke-width="1"/><path d="M7.5 54.5h3v-3" fill="none" stroke="#9cc4c0" stroke-width="1"/><path d="M17.2 49.6l1 1.6 1.8-0.4-0.4 1.8 1.6 1-1.6 1 0.4 1.8-1.8-0.4-1 1.6-1-1.6-1.8 0.4 0.4-1.8-1.6-1 1.6-1-0.4-1.8 1.8 0.4z" fill="#2f9410"/><path d="M35 51.5h5.5l1.2 1.8h5.3v3h-12z" fill="#222a52"/><path d="M35 52v12" stroke="#222a52" stroke-width="1.4"/><path d="M37.6 56.5h11l-2.1 7h-11z" fill="#e3e3ec" stroke="#62608a" stroke-width="1"/><path d="M64 52h10.2l1.8 1.8v10.2h-12z" fill="#2a2e5c"/><rect x="64" y="52" width="12" height="5.5" fill="#6c6cb4"/><rect x="66.8" y="52.5" width="6.5" height="4.6" fill="#fff"/><rect x="67" y="60" width="6" height="4" fill="#1f2348"/><rect x="69.3" y="60.3" width="1.4" height="3.2" fill="#fff"/><rect x="94.5" y="50.5" width="7" height="8" fill="#fff" stroke="#9ccac2"/><rect x="91.5" y="57.5" width="13" height="6" fill="#eeeedc" stroke="#4a4870"/><rect x="93" y="58" width="10" height="1.8" fill="#15152a"/><rect x="102" y="61" width="1" height="1" fill="#f4c400"/><g fill="none" stroke="#bdbdbd" stroke-width="1.3"><circle cx="129" cy="52.6" r="2.6"/><circle cx="129" cy="60" r="2.6"/></g><path d="M131 54.3l11 6.6-2.6 0.2-9.6-5.5zM131 58.3l11-6.6-2.6-0.2-9.6 5.5z" fill="#bdbdbd"/><g stroke="#cacaca" fill="#f2f2f2"><rect x="155.5" y="51.5" width="8" height="10"/><rect x="160.5" y="54.5" width="8" height="10" fill="#e6e6e6"/></g><path d="M157 55h4M157 57h3M157 59h3M162 58h3M162 60h5M162 62h5" stroke="#cfcfcf" stroke-width="1"/><rect x="183" y="52" width="9" height="11" fill="#5a4428"/><rect x="183" y="52" width="9" height="5" fill="#6f5838"/><path d="M184.5 53.5l1.5-3h3l1.5 3z" fill="#b8dcd8" stroke="#8cbcb8" stroke-width="0.6"/><circle cx="187.5" cy="52.3" r="0.7" fill="#222"/><rect x="188.5" y="55.5" width="8" height="9" fill="#fff" stroke="#55527a"/><path d="M190 58.5h3M190 60.5h5M190 62.5h5" stroke="#2a2a58" stroke-width="1"/><path d="M218.5 55.3l7-6.3v4c4.6 0 8 2.6 8 6.2 0 3-2.4 5.2-5.6 5.4l-0.6-1.2c1.8-0.6 2.8-1.8 2.8-3.2 0-1.8-1.8-3-4.6-3v4.4z" fill="#4a475e"/><path d="M243 56h5.5l-2.75 3.2z" fill="#000"/><path d="M276.5 55.3l-7-6.3v4c-4.6 0-8 2.6-8 6.2 0 3 2.4 5.2 5.6 5.4l0.6-1.2c-1.8-0.6-2.8-1.8-2.8-3.2 0-1.8 1.8-3 4.6-3v4.4z" fill="#c2c2c2"/><path d="M286 56h5.5l-2.75 3.2z" fill="#b4b4b4"/><rect x="311.5" y="48.500" width="17" height="17" fill="#fdfdfd"/><rect x="312" y="49" width="16" height="15.800" fill="#57297d"/><path d="M317 49.900L316 54.800L321.700 54.600L320.500 52.500C322 51 324 49.800 326.800 49L322.500 49C321 49.500 319.800 50.300 318.700 51.300Z" fill="#fff"/><path d="M322.100 56L316.800 56.600L318.300 58.300C316.500 60 314.500 61.300 312 62.200L312 63.400C315 63 317.800 61.900 320 60.200L321.100 61.400Z" fill="#fff"/><path d="M360.1 50.5h3.9999999999999996v9.4h-6.6v-6.800000000000001z" fill="#f6f8f8" stroke="#55527a" stroke-width="1"/><path d="M360.3 50.9v2.6h-2.4" fill="none" stroke="#9cc8c0" stroke-width="0.8"/><path d="M348 57.2h6.6l1.6 1.4v6.4h-8.2z" fill="#2a2e5c"/><rect x="348" y="57.2" width="8.2" height="2.4" fill="#6c6cb4"/><rect x="349.6" y="57.800000000000004" width="4.6" height="3.4" fill="#fff"/><rect x="351.4" y="62.800000000000004" width="1.2" height="1.2" fill="#fff"/><path d="M351 54.3h5.5v-1.8l3.4 2.7-3.4 2.7v-1.8h-5.5z" fill="#c80000"/><path d="M379.1 50.5h3.9999999999999996v9.4h-6.6v-6.800000000000001z" fill="#f6f8f8" stroke="#55527a" stroke-width="1"/><path d="M379.3 50.9v2.6h-2.4" fill="none" stroke="#9cc8c0" stroke-width="0.8"/><path d="M384 57.2h6.6l1.6 1.4v6.4h-8.2z" fill="#2a2e5c"/><rect x="384" y="57.2" width="8.2" height="2.4" fill="#6c6cb4"/><rect x="385.6" y="57.800000000000004" width="4.6" height="3.4" fill="#fff"/><rect x="387.4" y="62.800000000000004" width="1.2" height="1.2" fill="#fff"/><path d="M380 54.3h5.5v-1.8l3.4 2.7-3.4 2.7v-1.8h-5.5z" fill="#c80000"/><path d="M404.5 50.5h7l4 4v10h-11z" fill="#fafafa" stroke="#55527a"/><path d="M411.5 50.8v3.8h3.8" fill="#e0f0ec" stroke="#9cc8c0" stroke-width="0.8"/><path d="M404.6 56h12.2v-1.2l3.4 4.2-3.4 4.2v-1.2h-12.2z" fill="#1c1c30"/><text x="405.6" y="61.6" font-size="5.6" font-weight="bold" fill="#fff" font-family="Liberation Sans, sans-serif" letter-spacing="0.2">PDF</text><path d="M508 56l4 3.8 4-3.8" fill="none" stroke="#444" stroke-width="1.2"/><rect x="529.500" y="50.500" width="14" height="12" rx="1" fill="#fff" stroke="#6a68a0"/><rect x="531" y="52" width="11" height="9" fill="#8ccbd9"/><path d="M532 64.500h9" stroke="#6a68a0" stroke-width="1"/><path d="M532.500 56.500h8M536.500 53v7" stroke="#15152a" stroke-width="1"/><path d="M531.300 56.500l2-1.700v3.400zM541.700 56.500l-2-1.700v3.400zM536.500 51.800l-1.700 2h3.400zM536.500 61.200l-1.700-2h3.400z" fill="#15152a"/><path d="M565.5 49.5h16v5h-10.5v10h-5.5z" fill="#9aa8cc" stroke="#7684ac" stroke-width="1"/><path d="M568 50v2.5M570.5 50v2.5M573 50v2.5M575.5 50v2.5M578 50v2.5M566 57h2.5M566 59.500h2.500M566 62h2.500" stroke="#eef0f8" stroke-width="1"/><path d="M593 51.500h15M593 54.500h15M593 57.500h5M593 60.500h4M593 63.500h3M595.500 49v15M598.500 49v8M601.500 49v7M604.500 49v7M607.500 49v8" stroke="#b0b0d8" stroke-width="1" fill="none"/><path d="M596.800 60.500c2-3.600 4.500-4.700 6.200-4.700s4.400 1.100 6.200 4.700c-1.800 3.100-4.200 4.100-6.200 4.100s-4.200-1-6.200-4.100z" fill="#3c3c40"/><path d="M598.300 60.600c1.500-2.300 3.200-3 4.700-3s3.300 0.700 4.700 3c-1.400 2-3.200 2.700-4.700 2.700s-3.300-0.700-4.700-2.700z" fill="#d8d8d8"/><circle cx="603" cy="60.400" r="2.500" fill="#222226"/><circle cx="602.200" cy="59.500" r="0.800" fill="#ddd"/><path d="M621 55.500h15" stroke="#000" stroke-width="1" stroke-dasharray="1 1.500"/><path d="M626.500 50v15" stroke="#000" stroke-width="1" stroke-dasharray="1 1.500"/><circle cx="626.500" cy="55.500" r="1.200" fill="#fff" stroke="#55527a" stroke-width="0.600"/><path d="M628 61c1.500-2.500 3.200-3.200 4.600-3.200s3.200 0.700 4.600 3.200c-1.400 2.200-3.200 3-4.600 3s-3.200-0.800-4.600-3z" fill="#ececec" stroke="#9a9a9e" stroke-width="0.900"/><circle cx="632.600" cy="60.900" r="2" fill="#77777c"/><path d="M737 56h5.500l-2.750 3.200z" fill="#000"/><rect x="763.500" y="50.500" width="14" height="14" fill="#fff" stroke="#4a4870"/><rect x="763" y="50" width="15" height="2.400" fill="#686690"/><path d="M765.500 56.500h2.500l0.800 1.200h3.200v5.300h-6.500z" fill="#5c5cb2"/><path d="M770.500 54.500h3l2 2v5.500h-3.500" fill="#f4f8f8" stroke="#8c8cb0" stroke-width="0.800"/><rect x="765.500" y="61" width="7" height="2" fill="#4a4a90"/><rect x="793" y="51.2" width="3" height="3" fill="#f0f0f6" stroke="#8a88b0" stroke-width="0.700"/><path d="M797 52.7h8" stroke="#686690" stroke-width="1"/><path d="M793.300 52.1l1.500 1.700 4-4.300" fill="none" stroke="#129a12" stroke-width="1.300"/><rect x="793" y="56.1" width="3" height="3" fill="#f0f0f6" stroke="#8a88b0" stroke-width="0.700"/><path d="M797 57.6h8" stroke="#686690" stroke-width="1"/><path d="M793.300 57.0l1.500 1.700 4-4.300" fill="none" stroke="#129a12" stroke-width="1.300"/><rect x="793" y="61.0" width="3" height="3" fill="#f0f0f6" stroke="#8a88b0" stroke-width="0.700"/><path d="M797 62.5h8" stroke="#686690" stroke-width="1"/><path d="M793.300 61.9l1.500 1.700 4-4.300" fill="none" stroke="#129a12" stroke-width="1.300"/><rect x="828.500" y="49.500" width="12" height="9" fill="#e2e2ec" stroke="#4a4870"/><rect x="829" y="50" width="11" height="2" fill="#15152a"/><path d="M834.500 59.300c3 0.500 4.200 2.300 3.500 4-0.500 1.200-2 1.900-3.300 1.700 1-0.700 1.200-1.700 0.500-2.500-0.700 1-2 1-3 0.300-1.200-1-1-2.600 0.300-3.500z" fill="#f03010"/><path d="M835.500 62c1.500 0.500 1.800 2 0.500 3-0.800 0.200-1.500 0-2-0.300 1.300-0.400 1.800-1.500 1.500-2.700z" fill="#ffd020"/><path d="M851.800 56h5.500l-2.750 3.200z" fill="#000"/><path d="M148 90.700l4 3.800 4-3.800" fill="none" stroke="#444" stroke-width="1.200"/><path d="M552 90.700l4 3.800 4-3.800" fill="none" stroke="#444" stroke-width="1.200"/><rect x="170.500" y="81.500" width="8" height="9" fill="url(#pgf)" stroke="url(#pgs)"/><path d="M170.500 78v3M178.500 78v3M170.500 79.500h8" stroke="#2a2a40" stroke-width="1"/><rect x="173.500" y="95.500" width="7" height="9" fill="url(#pgf)" stroke="url(#pgs)"/><path d="M169.500 95.500v9M167.800 97.300l1.700-2 1.700 2M167.800 102.700l1.700 2 1.700-2" stroke="#2a2a40" stroke-width="1" fill="none"/><path d="M258.9 83.0h5.200l-2.600 3z" fill="#000"/><path d="M268.9 86.0h5.200l-2.600-3z" fill="#000"/><path d="M781.9 83.0h5.200l-2.600 3z" fill="#000"/><path d="M791.9 86.0h5.200l-2.600-3z" fill="#000"/><path d="M258.9 99.0h5.200l-2.600 3z" fill="#000"/><path d="M268.9 102.0h5.200l-2.600-3z" fill="#000"/><path d="M781.9 99.0h5.200l-2.600 3z" fill="#000"/><path d="M791.9 102.0h5.200l-2.600-3z" fill="#000"/><path d="M662.4 89.3h5.200l-2.600-3z" fill="#000"/><path d="M662.4 96.7h5.200l-2.600 3z" fill="#000"/><rect x="297.500" y="85.500" width="9" height="13" fill="url(#pgf)" stroke="url(#pgs)"/><rect x="323.500" y="89.500" width="13" height="9" fill="url(#pgf)" stroke="url(#pgs)"/><rect x="358.500" y="84.500" width="6" height="9" fill="url(#pgf)" stroke="url(#pgs)"/><rect x="362.500" y="87.500" width="6" height="9" fill="url(#pgf)" stroke="url(#pgs)"/><rect x="367.500" y="90.500" width="6" height="9" fill="url(#pgf)" stroke="url(#pgs)"/><rect x="386.500" y="88.500" width="3" height="11" fill="url(#pgf)" stroke="url(#pgs)"/><rect x="391.500" y="94.500" width="5" height="5" fill="url(#pgf)" stroke="url(#pgs)"/><rect x="398.500" y="92.500" width="3" height="7" fill="url(#pgf)" stroke="url(#pgs)"/><rect x="585.500" y="90.500" width="4" height="4" fill="#fff" stroke="#3a3a52"/><path d="M587.500 86l2.600 3h-5.200zM587.500 99l2.600-3h-5.200zM581 92.500l3-2.600v5.200zM594 92.500l-3-2.600v5.200z" fill="#3a3a52"/><rect x="691.500" y="78.5" width="5" height="6" fill="#f4f4f8" stroke="#3a3a58"/><rect x="694.500" y="81.5" width="5" height="6" fill="#f4f4f8" stroke="#3a3a58"/><rect x="691.500" y="94.5" width="5" height="6" fill="#f4f4f8" stroke="#3a3a58"/><rect x="694.500" y="97.5" width="5" height="6" fill="#f4f4f8" stroke="#3a3a58"/><path d="M699.500 86l4.500 4.500M704 86l-4.500 4.500" stroke="#2a2a40" stroke-width="1.100"/><path d="M699.500 102l2.300 2.600 2.300-2.600M701.800 104.600v2.400" stroke="#2a2a40" stroke-width="1.100" fill="none"/><rect x="818.500" y="85.500" width="9" height="9" fill="#fff" stroke="#3a3a58" stroke-dasharray="2 1"/><rect x="820" y="90" width="6" height="3.500" fill="#dcdce8"/><g fill="#3a3a58"><rect x="817.500" y="84.500" width="2" height="2"/><rect x="822" y="84.500" width="2" height="2"/><rect x="826.500" y="84.500" width="2" height="2"/><rect x="817.500" y="89" width="2" height="2"/><rect x="826.500" y="89" width="2" height="2"/><rect x="817.500" y="93.500" width="2" height="2"/><rect x="822" y="93.500" width="2" height="2"/></g><path d="M827.500 92.500l0 7 1.700-1.500 1.200 2.500 1.300-0.600-1.200-2.500 2.200-0.200z" fill="#fff" stroke="#7a7aa0" stroke-width="0.800"/><circle cx="868" cy="92.8" r="7.700" fill="#f6f6f6" stroke="#bebebe" stroke-width="1.100"/><path d="M863 92.8h10M868 87.8v10" stroke="#c2c2c2" stroke-width="2"/><circle cx="15" cy="665.8" r="7.700" fill="#f6f6f6" stroke="#bebebe" stroke-width="1.100"/><path d="M10 665.8h10M15 660.8v10" stroke="#c2c2c2" stroke-width="2"/><circle cx="1891" cy="305.5" r="7.700" fill="#f6f6f6" stroke="#bebebe" stroke-width="1.100"/><path d="M1886 305.5h10M1891 300.5v10" stroke="#c2c2c2" stroke-width="2"/><path d="M228 122.500h10M233 117.500v10" stroke="#bcbcbc" stroke-width="2"/><path d="M11.500 119.500v10.800l2.500-2.100 2.200 5.300 2.300-1.100-2.200-4.900 3.300-1.200z" fill="#f0f0f6" stroke="#66658e" stroke-width="1"/><path d="M25 132.0V136.7H20z" fill="#000"/><path d="M12.600 147.300c-2.600 4.500-2.800 10.500-0.200 15.300" fill="none" stroke="#55547c" stroke-width="1.100"/><rect x="9.500" y="151.700" width="3" height="3" fill="#fff" stroke="#3a3a58"/><path d="M13.900 155l6.900 3.300-4.100 3.400z" fill="#22223a"/><path d="M25 160.0V164.7H20z" fill="#000"/><g fill="#4a4870"><rect x="8" y="187.200" width="11" height="1.800"/><rect x="11.100" y="184" width="1.800" height="10.600"/><rect x="11.100" y="193" width="11" height="1.800"/><rect x="17" y="187.200" width="1.800" height="10.400"/></g><path d="M12.800 193l8.600-8.600" stroke="#22223a" stroke-width="1.100"/><rect x="11.100" y="186" width="1.800" height="1" fill="#80d0c0"/><rect x="17" y="192" width="1.800" height="1" fill="#80d0c0"/><path d="M25 196.0V200.7H20z" fill="#000"/><circle cx="13" cy="217.900" r="5.600" fill="#fff" stroke="#4a4870" stroke-width="1.100"/><path d="M8.200 218.400h9.600c-0.200 2.800-2.200 4.700-4.800 4.700s-4.600-1.900-4.800-4.700z" fill="#c6c6dc"/><path d="M17.200 222.200l5.600 5.400" stroke="#33324e" stroke-width="2.200"/><path d="M25 224.0V228.7H20z" fill="#000"/><path d="M10 250l10 10" stroke="#3a3a60" stroke-width="1"/><rect x="9" y="249" width="2" height="2" fill="#3a3a60"/><rect x="19" y="259" width="2" height="2" fill="#3a3a60"/><rect x="13.500" y="253.500" width="3" height="3" fill="#fff" stroke="#3a3a60"/><path d="M25 260.0V264.7H20z" fill="#000"/><path d="M9.600 283.200c-1.600-0.300-1.700-2.300-0.600-3.500 1.300-1.400 3.400-1 4.500 0.800 1.200 2 1.500 4.600 3.200 6 1.500 1.200 3.500 0.800 4.500-0.700" fill="none" stroke="#3a3a58" stroke-width="1.300" stroke-linecap="round"/><path d="M14.800 284.200c0.900 2 2.600 3.200 4.300 2.900 2-0.400 3-2.400 2.400-4.200-0.500-1.500-2.300-2-3.100-0.900" fill="none" stroke="#3a3a58" stroke-width="2.600" stroke-linecap="round"/><rect x="9.500" y="306.500" width="11" height="11" fill="url(#pgf)" stroke="url(#pgs)"/><path d="M25 316.0V320.7H20z" fill="#000"/><circle cx="15" cy="340" r="5.500" fill="url(#pgf)" stroke="url(#pgs)"/><path d="M25 344.0V348.7H20z" fill="#000"/><path d="M8.300 368l3.300-5.500h6.800l3.300 5.500-3.300 5.500h-6.800z" fill="url(#pgf)" stroke="url(#pgs)"/><path d="M25 372.0V376.7H20z" fill="#000"/><text x="7.600" y="410.600" font-size="20" font-weight="bold" font-family="Liberation Sans, sans-serif" fill="#f2f2f6" stroke="#77779a" stroke-width="0.9">A</text><path d="M25 407.8V412.5H20z" fill="#000"/><path d="M10.500 443l9.500-9" stroke="#2a2a48" stroke-width="1.200"/><path d="M8.500 440.600l4.600 4.800M17.500 431.600l4.600 4.800" stroke="#2a2a48" stroke-width="1.300"/><path d="M11 442.500l3.200-0.600-2.400-2.500zM19.500 434.500l-3.200 0.600 2.400 2.500z" fill="#2a2a48"/><path d="M25 444.0V448.7H20z" fill="#000"/><path d="M12.500 461.500l5 11" stroke="#3a3a60" stroke-width="1.100"/><rect x="10.500" y="459.500" width="4" height="4" fill="#f08000" stroke="#6a6a98"/><rect x="15.500" y="470.500" width="4" height="4" fill="#f08000" stroke="#6a6a98"/><path d="M25 472.0V476.7H20z" fill="#000"/><rect x="10.500" y="500.500" width="9.500" height="9.500" fill="#8c8cb2"/><rect x="8.500" y="498.500" width="9.500" height="9.500" fill="url(#pgf)" stroke="#4a4870"/><path d="M25 507.90000000000003V512.6H20z" fill="#000"/><path d="M12.500 527l2.500-4 5 4.500c-1 1.800-2.800 2.600-4.500 2.400s-3-1.300-3-2.900z" fill="#f4f4f8" stroke="#55547c" stroke-width="0.900"/><path d="M12.700 527.800l7 0c-1 1.600-2.600 2.200-4 2s-2.700-0.900-3-2z" fill="#2a3058"/><path d="M13.500 529.500l-4.500 4M7.300 531.500l3.500 4" stroke="#7a7aa0" stroke-width="1"/><path d="M19.500 531l3.500 7.500h-7z" fill="url(#trg)"/><rect x="7" y="567" width="8" height="8" fill="#f07800"/><rect x="9.600" y="569.600" width="2.700" height="2.700" fill="#fbe0c0"/><rect x="7" y="572.300" width="2.600" height="2.700" fill="#e06000"/><rect x="12.300" y="567" width="2.700" height="2.600" fill="#e06000"/><path d="M11.500 571.500l1-2.500 5.500-5.500 1.800 1.800-5.500 5.500z" fill="#9090a8" stroke="#33324e" stroke-width="0.700"/><path d="M17 561.500l4.500 4.500-1.300 1.300-4.500-4.500z" fill="#22223a"/><path d="M19 560.500c1.200-1.400 2.600-1.400 3.400-0.600s0.800 2.200-0.600 3.400l-1.600 1-2.200-2.200z" fill="#22223a"/><path d="M25 572.0V576.7H20z" fill="#000"/><path d="M13.5 588l4.500 4.400-4.600 4.400-4.400-4.400z" fill="#fff" stroke="#55547c" stroke-width="0.900"/><path d="M10.2 593.2h7l-3.800 3.400z" fill="#f08a10"/><path d="M12.2 588.3c1-1.600 2.800-1.200 2.600 1.200" fill="none" stroke="#22223a" stroke-width="0.900"/><circle cx="14.4" cy="591.6" r="0.700" fill="#22223a"/><path d="M17.500 596.400l3.500 6.400h-7z" fill="url(#org)"/><path d="M25 599.9V604.6H20z" fill="#000"/><path d="M11.5 615l4.500 4.400-4.600 4.400-4.400-4.400z" fill="#fff" stroke="#55547c" stroke-width="0.900"/><path d="M8.2 620.2h7l-3.800 3.400z" fill="#f08a10"/><path d="M10.2 615.3c1-1.600 2.800-1.200 2.600 1.200" fill="none" stroke="#22223a" stroke-width="0.900"/><circle cx="12.4" cy="618.6" r="0.700" fill="#22223a"/><rect x="15.500" y="622.500" width="7" height="5" fill="#fff" stroke="#3a3a60"/><rect x="13.500" y="625.500" width="7" height="5" fill="#fff" stroke="#3a3a60"/><path d="M15.500 620v6.500h4v-2h-2.500v-4.500z" fill="#f07800"/><path d="M1864.300 163l3.700-3.700 3.700 3.700" fill="none" stroke="#484848" stroke-width="1.800"/><path d="M1864.300 996l3.700 3.700 3.700-3.700" fill="none" stroke="#484848" stroke-width="1.800"/><path d="M975 1012.300l-3.700 3.700 3.700 3.700" fill="none" stroke="#484848" stroke-width="1.800"/><path d="M1849 1012.300l3.700 3.700-3.700 3.700" fill="none" stroke="#484848" stroke-width="1.800"/><g fill="#c0c0c0"><rect x="958" y="1011" width="2" height="2"/><rect x="958" y="1015" width="2" height="2"/><rect x="958" y="1019" width="2" height="2"/></g><circle cx="1866.800" cy="1014.800" r="4.700" fill="#fff" stroke="#3a3a58" stroke-width="1"/><g fill="#3a3a58"><circle cx="1866.800" cy="1012.500" r="0.900"/><circle cx="1864.500" cy="1014.800" r="0.900"/><circle cx="1869.100" cy="1014.800" r="0.900"/><circle cx="1866.800" cy="1017.100" r="0.900"/></g><path d="M1870.300 1018.300l3.900 3.800" stroke="#2a2a48" stroke-width="2"/><path d="M52.7 1010.100h5.400l2.700 2.700v7.400h-8.100z" fill="#fff" stroke="#000" stroke-width="1.100"/><path d="M57.8 1010.300v2.800h2.800" fill="none" stroke="#000" stroke-width="0.900"/><path d="M54.2 1016.600h5M56.7 1014.100v5" stroke="#000" stroke-width="1.200"/><path d="M192.7 1010.100h5.400l2.700 2.700v7.400h-8.100z" fill="#fff" stroke="#000" stroke-width="1.100"/><path d="M197.8 1010.300v2.800h2.800" fill="none" stroke="#000" stroke-width="0.900"/><path d="M194.2 1016.600h5M196.7 1014.100v5" stroke="#000" stroke-width="1.200"/><g fill="#808080"><rect x="70" y="1011.300" width="1.300" height="8.500"/><path d="M77 1011.300v8.500l-5.300-4.250z"/><path d="M94.500 1011.300v8.500l-5.300-4.250z"/><path d="M161 1011.300v8.500l5.300-4.250z"/><path d="M176 1011.300v8.500l5.300-4.250z"/><rect x="181.700" y="1011.300" width="1.300" height="8.500"/></g><g fill="#c8c8c8"><rect x="34" y="1029" width="2" height="2"/><rect x="34" y="1033" width="2" height="2"/><rect x="34" y="1037" width="2" height="2"/></g><path d="M42 1030v9l5.300-4.500z" fill="#000"/><path d="M54.300 1040.300l1-3 5.500-5.500 2 2-5.500 5.500z" fill="#5a9a9a" stroke="#3a5a68" stroke-width="0.600"/><path d="M60 1030.500l4.200 4.200-1.300 1.300-4.200-4.200z" fill="#22223a"/><path d="M62 1029.500c1.200-1.400 2.600-1.400 3.400-0.600s0.800 2.200-0.600 3.400l-1.400 0.800-2.200-2.200z" fill="#2a2a48"/><path d="M77 1030.700l-5 3.800 5 3.800" fill="none" stroke="#c4c4c4" stroke-width="1.400"/><path d="M84.500 1027.500l15 15M99.500 1027.500l-15 15" stroke="#000" stroke-width="1"/><path d="M1843 1030.500l5 4-5 4" fill="none" stroke="#d6d6d6" stroke-width="1.800"/><path d="M1859.500 1032l2.500 2.500-2.500 2.500M1863 1032l2.500 2.500-2.500 2.500" fill="none" stroke="#b8b8b8" stroke-width="1"/><path d="M115.300 1056.700v8.600l5.200-4.300z" fill="#000"/><rect x="1466" y="1054" width="15" height="11" rx="1" fill="#c0c4d8" stroke="#8088b0" stroke-width="1"/><rect x="1468" y="1056" width="11" height="7" fill="#5a6a78"/><path d="M1468 1056h3.700v7h-3.700z" fill="#b04040"/><path d="M1471.700 1056h3.700v7h-3.700z" fill="#3a9a5a"/><path d="M1475.300 1056h3.700v7h-3.700z" fill="#3a5ab0"/><circle cx="1473.500" cy="1059.500" r="2.300" fill="#fff" stroke="#222" stroke-width="1"/><path d="M1469 1067.500h9" stroke="#8088b0" stroke-width="1.200"/><path d="M1501 1054.500l6.500 6.500-5 5.500h-3.500l-4-4.500z" fill="#fff" stroke="#3a3a58" stroke-width="1"/><path d="M1496 1061.500h10.500l-4 4.500h-3.500z" fill="#f07800"/><path d="M1499.500 1057c0-3.500 4-3.500 4 0" fill="none" stroke="#22223a" stroke-width="1"/><path d="M1507.500 1061c2 0.500 2.800 2.500 2.500 5" fill="none" stroke="#f07800" stroke-width="1.200"/><path d="M1517.500 1053.500l15 15M1532.500 1053.500l-15 15" stroke="#000" stroke-width="1"/><path d="M1711.800 1053.500l-2.600 6.500 1.300 5h2.600l1.300-5z" fill="#fff" stroke="#3a3a58" stroke-width="1"/><path d="M1711.800 1056v6" stroke="#3a3a58" stroke-width="0.800"/><path d="M1708.500 1067.500h6.600" stroke="#3a3a58" stroke-width="1.600"/><path d="M1888 118l7.300 7.300M1895.300 118l-7.300 7.300" stroke="#a4a4a4" stroke-width="1.200"/><g><path d="M1885.500 141v10.500" stroke="#fff" stroke-width="1.200" stroke-dasharray="1 1"/><path d="M1890.800 141v10.500" stroke="#fff" stroke-width="1.200" stroke-dasharray="1 1"/><path d="M1891.800 142.500c-1.200 1.500 1.400 2.500 0.200 4.200s1 2.600-0.200 4" fill="none" stroke="#0a0a14" stroke-width="1.300"/><path d="M1886.500 138.500h3M1893.500 140.500h2M1893 149.500h2.500M1893 144.700h1.500" stroke="#55527a" stroke-width="1"/><circle cx="1885.400" cy="138.600" r="1.300" fill="#fff" stroke="#55527a" stroke-width="1.100"/><rect x="1889" y="136" width="4" height="4.700" fill="#55527a"/><rect x="1890" y="137" width="2" height="1" fill="#fff"/><rect x="1890" y="138.800" width="2" height="0.700" fill="#9a98c0"/><circle cx="1896.600" cy="140.400" r="1.200" fill="#fff" stroke="#55527a" stroke-width="1.100"/><rect x="1894.300" y="143" width="4.500" height="3.700" fill="#55527a"/><rect x="1895" y="144" width="3.100" height="0.800" fill="#b8b6d8"/><rect x="1895" y="145.300" width="3.100" height="0.600" fill="#8a88b0"/><circle cx="1896.400" cy="149.500" r="1.200" fill="#fff" stroke="#55527a" stroke-width="1.100"/></g><g fill="#b0b0b0"><rect x="1905.500" y="117.500" width="1.500" height="1.500"/><rect x="1909" y="117.500" width="1.500" height="1.500"/><rect x="1912.500" y="117.500" width="1.500" height="1.500"/></g><path d="M1908 123v9l5-4.500z" fill="#000"/><path d="M1905.300 148.500l1-3 5.500-5.500 2 2-5.500 5.500z" fill="#c6c6c6"/><path d="M1911 138.700l4.200 4.200-1.300 1.300-4.200-4.200z" fill="#bcbcbc"/><path d="M1913 137.700c1.200-1.400 2.600-1.400 3.400-0.600s0.800 2.200-0.600 3.400l-1.400 0.800-2.200-2.200z" fill="#c0c0c0"/><path d="M1907 160l3.700-3.600 3.700 3.600" fill="none" stroke="#cacaca" stroke-width="1.300"/><path d="M1907 1010.500l3.700 3.600 3.700-3.600" fill="none" stroke="#c4c4c4" stroke-width="1.300"/><path d="M1908 1025.500l2.500 2.500-2.500 2.500M1911.500 1025.500l2.500 2.500-2.500 2.500" fill="none" stroke="#b8b8b8" stroke-width="1"/></svg>
<div class="t" style="left:20.3px;top:4.8px;font-size:12px;color:#000;letter-spacing:-0.241px;">CorelDRAW X7 (64 bity) - Beznazwy-1</div>
<div class="t" style="left:8.3px;top:25.8px;font-size:12px;color:#000;letter-spacing:0.365px;"><u>P</u>lik</div>
<div class="t" style="left:45.3px;top:25.8px;font-size:12px;color:#000;letter-spacing:-0.118px;"><u>E</u>dycja</div>
<div class="t" style="left:97.0px;top:25.8px;font-size:12px;color:#000;letter-spacing:0.674px;"><u>W</u>idok</div>
<div class="t" style="left:149.3px;top:25.8px;font-size:12px;color:#000;letter-spacing:0.188px;"><u>U</u>kład</div>
<div class="t" style="left:197.3px;top:25.8px;font-size:12px;color:#000;letter-spacing:0.350px;"><u>O</u>biekt</div>
<div class="t" style="left:250.3px;top:25.8px;font-size:12px;color:#000;letter-spacing:0.016px;">Efe<u>k</u>ty</div>
<div class="t" style="left:300.3px;top:25.8px;font-size:12px;color:#000;letter-spacing:0.306px;"><u>M</u>apy bitowe</div>
<div class="t" style="left:387.3px;top:25.8px;font-size:12px;color:#000;letter-spacing:0.106px;"><u>T</u>ekst</div>
<div class="t" style="left:433.3px;top:25.8px;font-size:12px;color:#000;letter-spacing:0.013px;"><u>T</u>abela</div>
<div class="t" style="left:486.3px;top:25.8px;font-size:12px;color:#000;letter-spacing:-0.199px;"><u>N</u>arzędzia</div>
<div class="t" style="left:555.3px;top:25.8px;font-size:12px;color:#000;letter-spacing:0.584px;"><u>O</u>kno</div>
<div class="t" style="left:602.3px;top:25.8px;font-size:12px;color:#000;letter-spacing:0.520px;">Pomo<u>c</u></div>
<div class="t" style="left:32.6px;top:116.8px;font-size:12px;color:#000;letter-spacing:0.009px;">Ekran powitalny</div>
<div class="t" style="left:140.5px;top:116.8px;font-size:12px;color:#000;letter-spacing:-0.348px;">Beznazwy-1</div>
<div class="t" style="left:442.3px;top:51.8px;font-size:12px;color:#000;letter-spacing:-0.296px;">62%</div>
<div class="t" style="left:657.3px;top:51.8px;font-size:12px;color:#000;letter-spacing:-0.076px;">Przyciągaj do</div>
<div class="t" style="left:6.8px;top:86.8px;font-size:12px;color:#000;letter-spacing:-0.147px;">A4</div>
<div class="t" style="left:185.3px;top:78.8px;font-size:12px;color:#000;letter-spacing:-0.060px;">210,0 mm</div>
<div class="t" style="left:185.3px;top:94.8px;font-size:12px;color:#000;letter-spacing:-0.060px;">297,0 mm</div>
<div class="t" style="left:420.3px;top:86.8px;font-size:12px;color:#000;letter-spacing:-0.177px;">Jednostki:</div>
<div class="t" style="left:478.6px;top:86.8px;font-size:12px;color:#000;letter-spacing:0.517px;">milimetry</div>
<div class="t" style="left:600.3px;top:86.8px;font-size:12px;color:#000;letter-spacing:0.085px;">0,1 mm</div>
<div class="t" style="left:708.6px;top:78.8px;font-size:12px;color:#000;letter-spacing:0.165px;">5,0 mm</div>
<div class="t" style="left:708.6px;top:94.8px;font-size:12px;color:#000;letter-spacing:0.165px;">5,0 mm</div>
<div class="t" style="left:114.2px;top:1010.3px;font-size:12px;color:#000;letter-spacing:-0.150px;">1 z 1</div>
<div class="t" style="left:220.3px;top:1008.8px;font-size:12px;color:#000;letter-spacing:-0.276px;">Strona 1</div>
<div class="t" style="left:4.8px;top:1055.8px;font-size:12px;color:#000;letter-spacing:-0.419px;">( -79,791; 209,723 )</div>
<div class="t" style="left:1536.8px;top:1055.8px;font-size:12px;color:#000;letter-spacing:-0.249px;">Brak</div>
<div class="t" style="left:1745.3px;top:1055.8px;font-size:12px;color:#000;letter-spacing:-0.358px;">C:0 M:0 Y:0 K:100</div>
<div class="t" style="left:1841.3px;top:1055.8px;font-size:12px;color:#000;letter-spacing:-0.060px;">0,200 mm</div>
</body></html>
